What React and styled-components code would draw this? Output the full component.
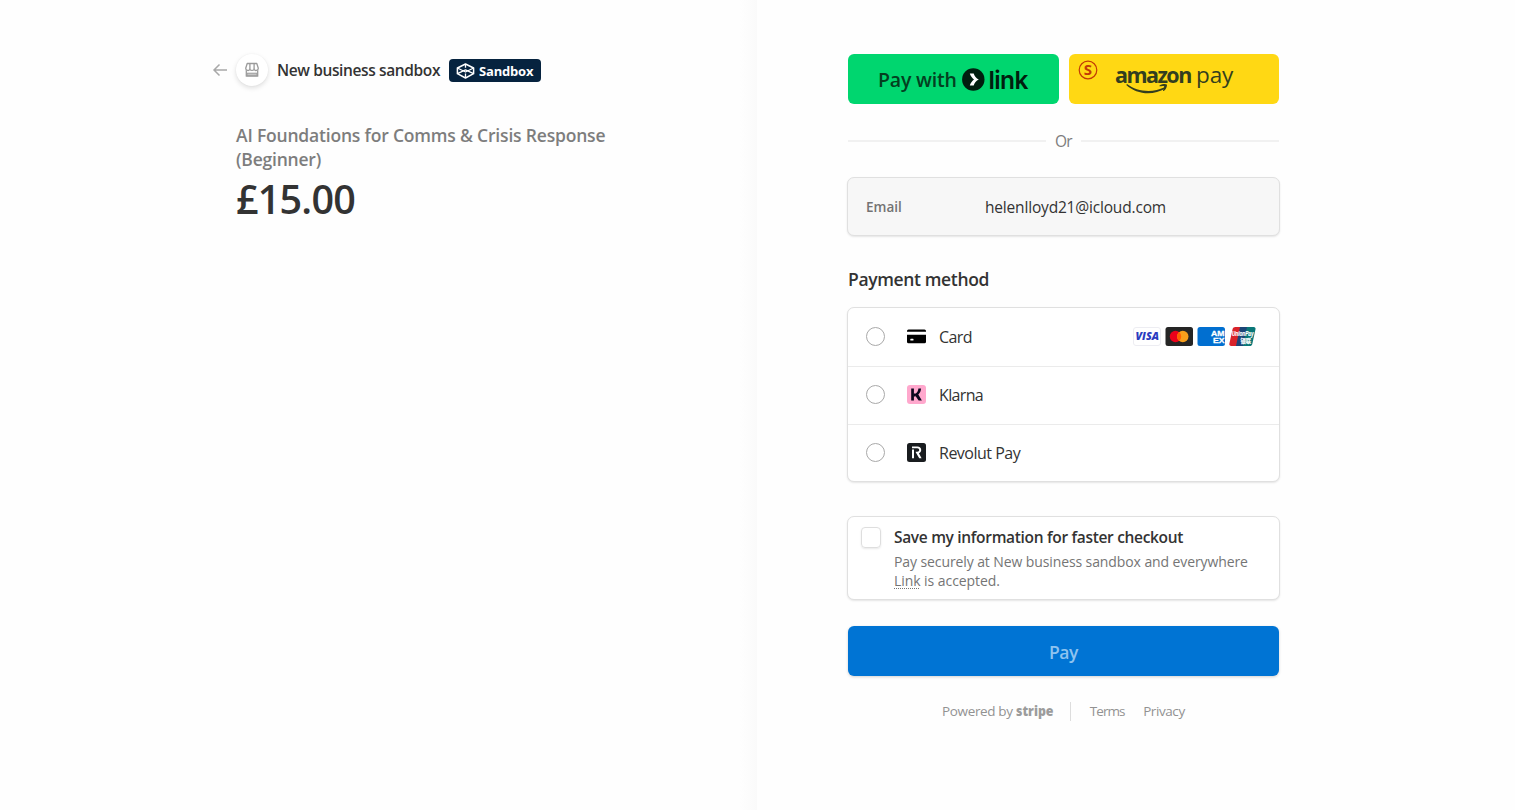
import React from "react";
import styled, { createGlobalStyle } from "styled-components";

const Global = createGlobalStyle`
  * { box-sizing: border-box; }
  body { margin: 0; background: #fefefe; font-family: "Open Sans", "Noto Sans", sans-serif; color: #333; }
`;

const Page = styled.main`
  display: flex;
  width: 1515px;
  height: 810px;
  overflow: hidden;
`;

const Summary = styled.section`
  width: 757px;
  padding: 53px 0 0 212px;
  background: linear-gradient(90deg, rgba(251, 251, 251, 0) 740px, #fafafa 757px);
`;

const Header = styled.header`
  display: flex;
  align-items: center;
  height: 34px;
`;

const BackArrow = styled.svg`
  width: 16px;
  height: 16px;
  margin-right: 8px;
`;

const Avatar = styled.span`
  display: grid;
  place-items: center;
  width: 32px;
  height: 32px;
  margin-right: 9px;
  border-radius: 50%;
  background: #fff;
  box-shadow: 0 2px 5px rgba(0, 0, 0, 0.13), 0 0 2px rgba(0, 0, 0, 0.04);
`;

const Text = styled.span`
  font-family: "Open Sans", "Noto Sans", sans-serif;
  font-size: ${(p) => p.$size}px;
  font-weight: ${(p) => p.$weight || 400};
  letter-spacing: ${(p) => p.$track || 0}px;
  color: ${(p) => p.$color || "#333"};
  line-height: ${(p) => p.$line || 20}px;
  white-space: nowrap;
`;

const Badge = styled.span`
  display: flex;
  align-items: center;
  gap: 4px;
  width: 92px;
  height: 23px;
  margin-left: 9px;
  padding: 1px 0 0 7px;
  border-radius: 4px;
  background: #06233f;
`;

const Product = styled.div`
  display: flex;
  flex-direction: column;
  padding: 36px 0 0 24px;
`;

const Checkout = styled.section`
  display: flex;
  flex-direction: column;
  width: 433px;
  margin: 54px 0 0 90px;
`;

const Wallets = styled.div`
  display: grid;
  grid-template-columns: 211px 210px;
  gap: 10px;
  padding-left: 1px;
`;

const Wallet = styled.button`
  display: flex;
  align-items: center;
  height: 50px;
  border: 0;
  border-radius: 6px;
`;

const LinkWallet = styled(Wallet)`
  gap: 5px;
  padding: 1px 0 0 30px;
  background: #00d66f;
`;

const AmazonWallet = styled(Wallet)`
  align-items: flex-start;
  padding: 6px 0 0 9px;
  background: #ffd814;
`;

const Logo = styled.svg`
  flex: none;
  overflow: visible;
`;

const AmazonLogo = styled(Logo)`
  margin: 3px 0 0 17px;
`;

const Divider = styled.div`
  display: flex;
  align-items: center;
  gap: 9px;
  height: 20px;
  margin: 27px 1px 26px;
  &::before, &::after { content: ""; flex: 1; height: 2px; background: #f1f1f1; }
`;

const Panel = styled.div`
  border: 1px solid #e0e0e0;
  border-radius: 7px;
  background: ${(p) => p.$fill || "#fff"};
  box-shadow: 0 1px 2px rgba(0, 0, 0, 0.1);
`;

const EmailPanel = styled(Panel)`
  display: grid;
  grid-template-columns: 119px 1fr;
  align-items: center;
  height: 59px;
  padding-left: 18px;
`;

const Heading = styled.h2`
  margin: 33px 0 18px 1px;
  font-size: 17.5px;
  font-weight: 600;
  letter-spacing: -0.36px;
  line-height: 20px;
`;

const Row = styled.div`
  display: flex;
  align-items: center;
  height: 58px;
  padding: 0 23px 1px 18px;
  & + & { border-top: 1px solid #ebebeb; padding-bottom: 2px; }
  &:last-child { height: 57px; padding-bottom: 1px; }
`;

const Radio = styled.span`
  width: 19px;
  height: 19px;
  margin-right: 22px;
  border: 1px solid #a9a9a9;
  border-radius: 50%;
`;

const Brands = styled.span`
  display: flex;
  gap: 4px;
  margin-left: auto;
`;

const MethodIcon = styled.svg`
  width: 19px;
  height: 19px;
  margin-right: 13px;
`;

const SavePanel = styled(Panel)`
  display: flex;
  height: 84px;
  margin-top: 34px;
  padding: 10px 0 0 13px;
`;

const Checkbox = styled.span`
  width: 20px;
  height: 21px;
  margin-right: 13px;
  border: 1px solid #dedede;
  border-radius: 4px;
  box-shadow: 0 1px 2px rgba(0, 0, 0, 0.09);
`;

const SaveCopy = styled.div`
  display: flex;
  flex-direction: column;
`;

const LinkWord = styled.span`
  text-decoration: underline dotted 1px;
  text-underline-offset: 2px;
`;

const SaveDetail = styled.p`
  display: flex;
  flex-direction: column;
  margin: 5px 0 0;
`;

const PayButton = styled.button`
  height: 50px;
  margin: 26px 1px 0;
  padding: 2px 0 0;
  border: 0;
  border-radius: 6px;
  background: #0074d4;
  box-shadow: 0 1px 3px rgba(0, 0, 0, 0.18);
`;

const Footer = styled.footer`
  display: flex;
  align-items: center;
  height: 20px;
  margin: 25px 0 0 95px;
`;

const StripeLogo = styled(Logo)`
  margin: 1px 16px 0 3px;
`;

const Rule = styled.span`
  width: 1px;
  height: 19px;
  margin-right: 19px;
  background: #ddd;
`;

const Terms = styled(Text)`
  margin-right: 18.5px;
`;

const StoreIcon = () => (
  <svg width="16" height="16" viewBox="0 0 16 16" fill="none" stroke="#9b9b9b" strokeWidth="1.3" strokeLinejoin="round">
    <path d="M3.200 1.500h9.600l1.500 4.800c0 2.500-3.300 2.900-4.200.9-.9 1.600-3.300 1.600-4.200 0-1 2-4.200 1.600-4.200-.9z" />
    <path d="M5.900 7V1.500M10.100 7V1.500M2.300 8.300v5.900h11.400V8.300" />
    <path d="M3 11.200h10v2.500H3z" fill="#c4c4c4" strokeWidth="1" />
  </svg>
);

const CubeIcon = () => (
  <svg width="19" height="16" viewBox="0 0 19 16" fill="none" stroke="#fff" strokeWidth="1.5" strokeLinejoin="round">
    <path d="M9.500 1 17.600 5v5.700L9.500 15 1.400 10.700V5z" />
    <path d="M1.400 5 9.500 9l8.100-4M1.400 10.700 9.500 6.800l8.100 3.900M9.500 1v3.800M9.500 10.500V15" strokeWidth="1.300" />
  </svg>
);

const LinkLogo = () => (
  <Logo width="68" height="26" viewBox="0 0 68 26">
    <circle cx="11.300" cy="12.500" r="11.200" fill="#011e0f" />
    <path d="M7.800 6.500h3.900c.6 2.600 2.600 4.800 5.100 6-2.500 1.200-4.500 3.400-5.100 6H7.800c.7-2.400 2.200-4.500 4.200-6-2-1.500-3.500-3.600-4.200-6z" fill="#fff" />
    <text x="26.500" y="21.500" fontFamily="Inter, sans-serif" fontSize="24.500" fontWeight="600" fill="#011e0f" letterSpacing="-.6">link</text>
  </Logo>
);

const BadgeS = () => (
  <Logo width="20" height="20" viewBox="0 0 20 20">
    <circle cx="10" cy="10" r="8.800" fill="none" stroke="#c23a06" strokeWidth="1.200" />
    <text x="10" y="15.300" textAnchor="middle" fontFamily="Open Sans, sans-serif" fontSize="15" fontWeight="700" fill="#c23a06">S</text>
  </Logo>
);

const AmazonPay = () => (
  <AmazonLogo width="122" height="34" viewBox="0 0 122 34" fill="#333e1f">
    <text x="0" y="20" fontFamily="Open Sans, sans-serif" fontSize="21.500" fontWeight="700" letterSpacing="-1.550">amazon</text>
    <text x="81" y="20" fontFamily="Open Sans, sans-serif" fontSize="22.500" letterSpacing="-.1">pay</text>
    <path d="M12 21C22 29 38 30 49.500 24.300l.8 1.200C38 33 21.500 31.500 11.300 22z" />
    <path d="M44.500 22.500c3-1.900 6.500-1.800 7.300-1 .6 1.100-.5 4.700-3 6.600l-.9-.4c.8-1.900 1.600-4 1.200-4.500-.6-.6-3.100-.2-4.700.1z" />
  </AmazonLogo>
);

const CardIcon = () => (
  <MethodIcon viewBox="0 0 19 19">
    <path d="M1.500 2.500h16A1.500 1.500 0 0 1 19 4v.8H0V4a1.500 1.500 0 0 1 1.500-1.500zM0 7.800h19v7a1.500 1.500 0 0 1-1.500 1.500h-16A1.500 1.500 0 0 1 0 14.800z" />
    <rect x="3.300" y="11.700" width="3.200" height="1.900" rx=".5" fill="#fff" />
  </MethodIcon>
);

const KlarnaIcon = () => (
  <MethodIcon viewBox="0 0 19 19">
    <rect width="19" height="19" rx="3" fill="#ffa8cd" />
    <path d="M4.200 3.500h2.700v12H4.200zM11.400 3.500H14c0 2.600-1.100 4.600-2.700 5.900l3.600 6.100h-3.300L7.500 9.500c2.400-1.500 3.800-3.400 3.900-6z" fill="#0b051d" />
    <path d="M6.500 8.500h2v3h-2z" fill="#0b051d" />
  </MethodIcon>
);

const RevolutIcon = () => (
  <MethodIcon viewBox="0 0 19 19">
    <rect width="19" height="19" rx="2.500" fill="#191c1f" />
    <path d="M5 6.600h2v8.700H5zM5 3.500h5.400c2.300 0 3.800 1.400 3.800 3.500 0 1.600-.9 2.700-2.300 3.200l2.700 5.100h-2.400L8.700 9.300v-.6h1.600c1.200 0 1.900-.7 1.900-1.700s-.7-1.700-1.900-1.700H5z" fill="#fff" />
  </MethodIcon>
);

const VisaIcon = () => (
  <Logo width="28" height="19" viewBox="0 0 28 19">
    <rect x=".5" y=".5" width="27" height="18" rx="2.500" fill="#fff" stroke="#ededf2" />
    <text x="2.500" y="13.300" fontFamily="Open Sans, sans-serif" fontSize="10.500" fontWeight="800" fontStyle="italic" fill="#2a3cc0" textLength="23.500" lengthAdjust="spacingAndGlyphs">VISA</text>
  </Logo>
);

const MastercardIcon = () => (
  <Logo width="28" height="19" viewBox="0 0 28 19">
    <rect x=".5" width="27.500" height="19" rx="2.500" fill="#252525" />
    <circle cx="10.500" cy="9.500" r="5.700" fill="#eb001b" />
    <circle cx="17.800" cy="9.500" r="5.700" fill="#f79e1b" />
    <path d="M14.150 5.100a5.700 5.700 0 0 1 0 8.800 5.700 5.700 0 0 1 0-8.800z" fill="#ff5f00" />
  </Logo>
);

const AmexIcon = () => (
  <Logo width="28" height="19" viewBox="0 0 28 19">
    <rect x=".5" width="27.500" height="19" rx="2.500" fill="#016fd0" />
    <g fontFamily="Liberation Sans, sans-serif" fontSize="7.800" fontWeight="700" fill="#fff" stroke="#fff" strokeWidth=".3">
      <text x="14" y="8.800" textLength="13.500" lengthAdjust="spacingAndGlyphs">AM</text>
      <text x="16" y="15.600" textLength="11.500" lengthAdjust="spacingAndGlyphs">EX</text>
    </g>
  </Logo>
);

const UnionPayIcon = () => (
  <Logo width="27" height="19" viewBox="0 0 27 19">
    <path d="M6.300 0H12L8 19H2.300C.8 19 0 18 .4 16.600L3.600 2C3.900.8 5 0 6.300 0z" fill="#d9222a" />
    <path d="M11 0h8l-4 19H7z" fill="#1c4577" />
    <path d="M18 0h6.800c1.200 0 2 1 1.700 2.200l-3.200 14.700c-.3 1.300-1.300 2.100-2.500 2.100H14z" fill="#0a7778" />
    <g fontWeight="700" fill="#fff" stroke="#fff" strokeWidth=".2">
      <text x="3" y="9" fontFamily="Liberation Sans, sans-serif" fontSize="6.300" fontStyle="italic" textLength="21.500" lengthAdjust="spacingAndGlyphs">UnionPay</text>
      <text x="11.500" y="15.500" fontFamily="Noto Sans CJK SC, sans-serif" fontSize="5.500" textLength="10.500" lengthAdjust="spacingAndGlyphs">银联</text>
    </g>
  </Logo>
);

const methods = [
  { name: "Card", Icon: CardIcon, track: -0.6, brands: true },
  { name: "Klarna", Icon: KlarnaIcon, track: -0.65 },
  { name: "Revolut Pay", Icon: RevolutIcon, track: -0.5 },
];

export default function App() {
  return (
    <>
      <Global />
      <Page>
        <Summary>
          <Header>
            <BackArrow viewBox="0 0 16 16" fill="none" stroke="#a8a8a8" strokeWidth="1.5">
              <path d="M15 8H2M7.500 2.500 2 8l5.500 5.500" />
            </BackArrow>
            <Avatar><StoreIcon /></Avatar>
            <Text $size={15.5} $weight={600} $track={-0.38}>New business sandbox</Text>
            <Badge>
              <CubeIcon />
              <Text $size={13} $weight={700} $track={-0.2} $color="#fff">Sandbox</Text>
            </Badge>
          </Header>
          <Product>
            <Text $size={17.5} $weight={600} $track={-0.19} $line={24} $color="#7d7d7d">AI Foundations for Comms &amp; Crisis Response</Text>
            <Text $size={17.5} $weight={600} $track={-0.22} $line={24} $color="#7d7d7d">(Beginner)</Text>
            <Text $size={39.5} $weight={600} $track={-0.8} $line={57}>£15.00</Text>
          </Product>
        </Summary>
        <Checkout>
          <Wallets>
            <LinkWallet>
              <Text $size={19.5} $weight={600} $track={-0.2} $line={26} $color="#04401f">Pay with</Text>
              <LinkLogo />
            </LinkWallet>
            <AmazonWallet>
              <BadgeS />
              <AmazonPay />
            </AmazonWallet>
          </Wallets>
          <Divider><Text $size={15.5} $track={-0.6} $color="#7c7c7c">Or</Text></Divider>
          <EmailPanel $fill="#f7f7f7">
            <Text $size={13.5} $weight={600} $color="#737373">Email</Text>
            <Text $size={15.5} $track={-0.18}>helenlloyd21@icloud.com</Text>
          </EmailPanel>
          <Heading>Payment method</Heading>
          <Panel>
            {methods.map(({ name, Icon, track, brands }) => (
              <Row key={name}>
                <Radio />
                <Icon />
                <Text $size={16} $track={track}>{name}</Text>
                {brands && (
                  <Brands>
                    <VisaIcon />
                    <MastercardIcon />
                    <AmexIcon />
                    <UnionPayIcon />
                  </Brands>
                )}
              </Row>
            ))}
          </Panel>
          <SavePanel>
            <Checkbox />
            <SaveCopy>
              <Text $size={15.5} $weight={600} $track={-0.32}>Save my information for faster checkout</Text>
              <SaveDetail>
                <Text $size={14} $track={-0.1} $line={19} $color="#757575">Pay securely at New business sandbox and everywhere</Text>
                <Text $size={14} $track={-0.06} $line={19} $color="#757575"><LinkWord>Link</LinkWord> is accepted.</Text>
              </SaveDetail>
            </SaveCopy>
          </SavePanel>
          <PayButton><Text $size={17.5} $weight={600} $track={-0.4} $color="#8fc3ef">Pay</Text></PayButton>
          <Footer>
            <Text $size={13.5} $track={-0.35} $color="#929292">Powered by</Text>
            <StripeLogo width="38" height="19" viewBox="0 0 38 19">
              <text x="0" y="14" fontFamily="Open Sans, sans-serif" fontSize="14.500" fontWeight="800" fill="#9c9c9c" textLength="37.500" lengthAdjust="spacingAndGlyphs">stripe</text>
            </StripeLogo>
            <Rule />
            <Terms $size={13.5} $track={-0.9} $color="#929292">Terms</Terms>
            <Text $size={13.5} $track={-0.42} $color="#929292">Privacy</Text>
          </Footer>
        </Checkout>
      </Page>
    </>
  );
}
